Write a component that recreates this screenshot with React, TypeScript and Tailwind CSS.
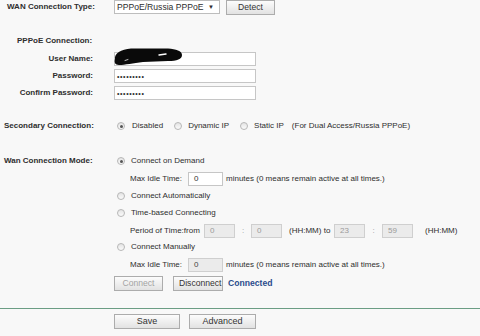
import React from "react";

function Radio({ checked }: { checked?: boolean }) {
  return (
    <span className="w-[8px] h-[8px] rounded-full border border-[#b7b7b7] bg-linear-to-b from-[#e4e4e4] to-[#fbfbfb] flex items-center justify-center shrink-0">
      {checked && <span className="w-[3px] h-[3px] rounded-full bg-[#555]" />}
    </span>
  );
}

const btn =
  "h-[15px] border border-[#acacac] bg-linear-to-b from-[#fcfcfc] to-[#e2e2e2] text-[8.6px] text-[#333] leading-none flex items-center justify-center";

function Field({ children, disabled, w = "w-[31px]" }: { children?: React.ReactNode; disabled?: boolean; w?: string }) {
  return (
    <div
      className={
        w +
        " h-[14px] border flex items-center pl-[5px] text-[8px] " +
        (disabled ? "bg-[#ebebeb] border-[#cfcfcf] text-[#9a9a9a]" : "bg-white border-[#c6c6c6] text-[#333]")
      }
    >
      {children}
    </div>
  );
}

export default function App() {
  return (
    <div className="w-[480px] h-[336px] bg-[#f8f8f8] overflow-hidden relative font-['Liberation_Sans',Arial,sans-serif] text-[8px] text-[#2e2e2e] leading-none">
      {/* WAN Connection Type */}
      <div className="flex items-center h-[14px]">
        <div className="w-[114px] pl-[7px] font-bold">WAN Connection Type:</div>
        <div className="w-[106px] h-[14px] bg-white border border-[#bdbdbd] flex items-center justify-between pl-[2px] pr-[5px] text-[8.6px]">
          <span>PPPoE/Russia PPPoE</span>
          <span className="text-[6px]">▼</span>
        </div>
        <button className={btn + " ml-[6px] w-[49px] h-[14px]"}>Detect</button>
      </div>

      {/* PPPoE Connection */}
      <div className="flex items-center h-[14px] mt-[20px]">
        <div className="pl-[17px] font-bold">PPPoE Connection:</div>
      </div>

      {/* User Name */}
      <div className="flex items-center h-[14px] mt-[4px]">
        <div className="w-[114px] pr-[21px] text-right font-bold">User Name:</div>
        <div className="w-[142px] h-[14px] bg-white border border-[#c6c6c6]" />
      </div>
      <div className="flex items-center h-[14px] mt-[3px]">
        <div className="w-[114px] pr-[21px] text-right font-bold">Password:</div>
        <div className="w-[142px] h-[14px] bg-white border border-[#c6c6c6] flex items-center pl-[2px] text-[7px] tracking-[0.6px]">
          •••••••••
        </div>
      </div>
      <div className="flex items-center h-[14px] mt-[3px]">
        <div className="w-[114px] pr-[21px] text-right font-bold">Confirm Password:</div>
        <div className="w-[142px] h-[14px] bg-white border border-[#c6c6c6] flex items-center pl-[2px] text-[7px] tracking-[0.6px]">
          •••••••••
        </div>
      </div>

      {/* Secondary Connection */}
      <div className="flex items-center h-[14px] mt-[19px]">
        <div className="w-[114px] pl-[4px] font-bold">Secondary Connection:</div>
        <span className="ml-[3px]">
          <Radio checked />
        </span>
        <span className="ml-[7px]">Disabled</span>
        <span className="ml-[11px]">
          <Radio />
        </span>
        <span className="ml-[6px]">Dynamic IP</span>
        <span className="ml-[11px]">
          <Radio />
        </span>
        <span className="ml-[6px]">Static IP</span>
        <span className="ml-[8px]">(For Dual Access/Russia PPPoE)</span>
      </div>

      {/* Wan Connection Mode */}
      <div className="flex items-center h-[14px] mt-[21px]">
        <div className="w-[114px] pl-[4px] font-bold">Wan Connection Mode:</div>
        <span className="ml-[3px]">
          <Radio checked />
        </span>
        <span className="ml-[6px]">Connect on Demand</span>
      </div>
      <div className="flex items-center h-[14px] mt-[4px] pl-[130px]">
        <span className="w-[58px]">Max Idle Time:</span>
        <Field w="w-[35px]">0</Field>
        <span className="ml-[3px]">minutes (0 means remain active at all times.)</span>
      </div>
      <div className="flex items-center h-[14px] mt-[3px] pl-[117px]">
        <Radio />
        <span className="ml-[6px]">Connect Automatically</span>
      </div>
      <div className="flex items-center h-[14px] mt-[3px] pl-[117px]">
        <Radio />
        <span className="ml-[6px]">Time-based Connecting</span>
      </div>
      <div className="flex items-center h-[14px] mt-[4px] pl-[130px]">
        <span className="w-[74px]">Period of Time:from</span>
        <Field disabled>0</Field>
        <span className="w-[16px] text-center text-[#9a9a9a]">:</span>
        <Field disabled>0</Field>
        <span className="ml-[7px] w-[45px]">(HH:MM) to</span>
        <Field disabled>23</Field>
        <span className="w-[17px] text-center text-[#9a9a9a]">:</span>
        <Field disabled>59</Field>
        <span className="ml-[12px]">(HH:MM)</span>
      </div>
      <div className="flex items-center h-[14px] mt-[2px] pl-[117px]">
        <Radio />
        <span className="ml-[6px]">Connect Manually</span>
      </div>
      <div className="flex items-center h-[14px] mt-[4px] pl-[130px]">
        <span className="w-[58px]">Max Idle Time:</span>
        <Field disabled w="w-[35px]">
          <span className="text-[#444]">0</span>
        </Field>
        <span className="ml-[3px]">minutes (0 means remain active at all times.)</span>
      </div>

      {/* Connect buttons */}
      <div className="flex items-center h-[15px] mt-[4px] pl-[114px]">
        <button className={btn + " w-[49px] text-[#a3a3a3]"}>Connect</button>
        <button className={btn + " ml-[10px] w-[50px] justify-start pl-[5px] overflow-hidden whitespace-nowrap"}>
          Disconnect
        </button>
        <span className="ml-[5px] font-bold text-[8.6px] text-[#2a4c8c]">Connected</span>
      </div>

      {/* separator */}
      <div className="mt-[17px] h-px bg-[#6b9d84]" />

      {/* Save row */}
      <div className="flex items-center h-[15px] mt-[5px] pl-[114px]">
        <button className={btn + " w-[66px] text-[9px]"}>Save</button>
        <button className={btn + " ml-[9px] w-[67px] text-[9px]"}>Advanced</button>
      </div>

      {/* redaction scribble over user name */}
      <svg className="absolute left-[113px] top-[47px]" width="70" height="19" viewBox="0 0 70 19">
        <path
          d="M2,12 C1,7 8,2 18,1.5 L55,1.5 C63,2 69,4 69,8 C69,12 64,14 55,14 L30,15 C20,16 12,18 6,18 C2,18 1,15 2,12 Z"
          fill="#0a0a0a"
        />
        <path d="M46,8 L53,7" stroke="#ffffff" strokeWidth="1.4" strokeLinecap="round" />
        <path d="M12,13.5 L15,12.5" stroke="#bbbbbb" strokeWidth="1" strokeLinecap="round" />
      </svg>
    </div>
  );
}
